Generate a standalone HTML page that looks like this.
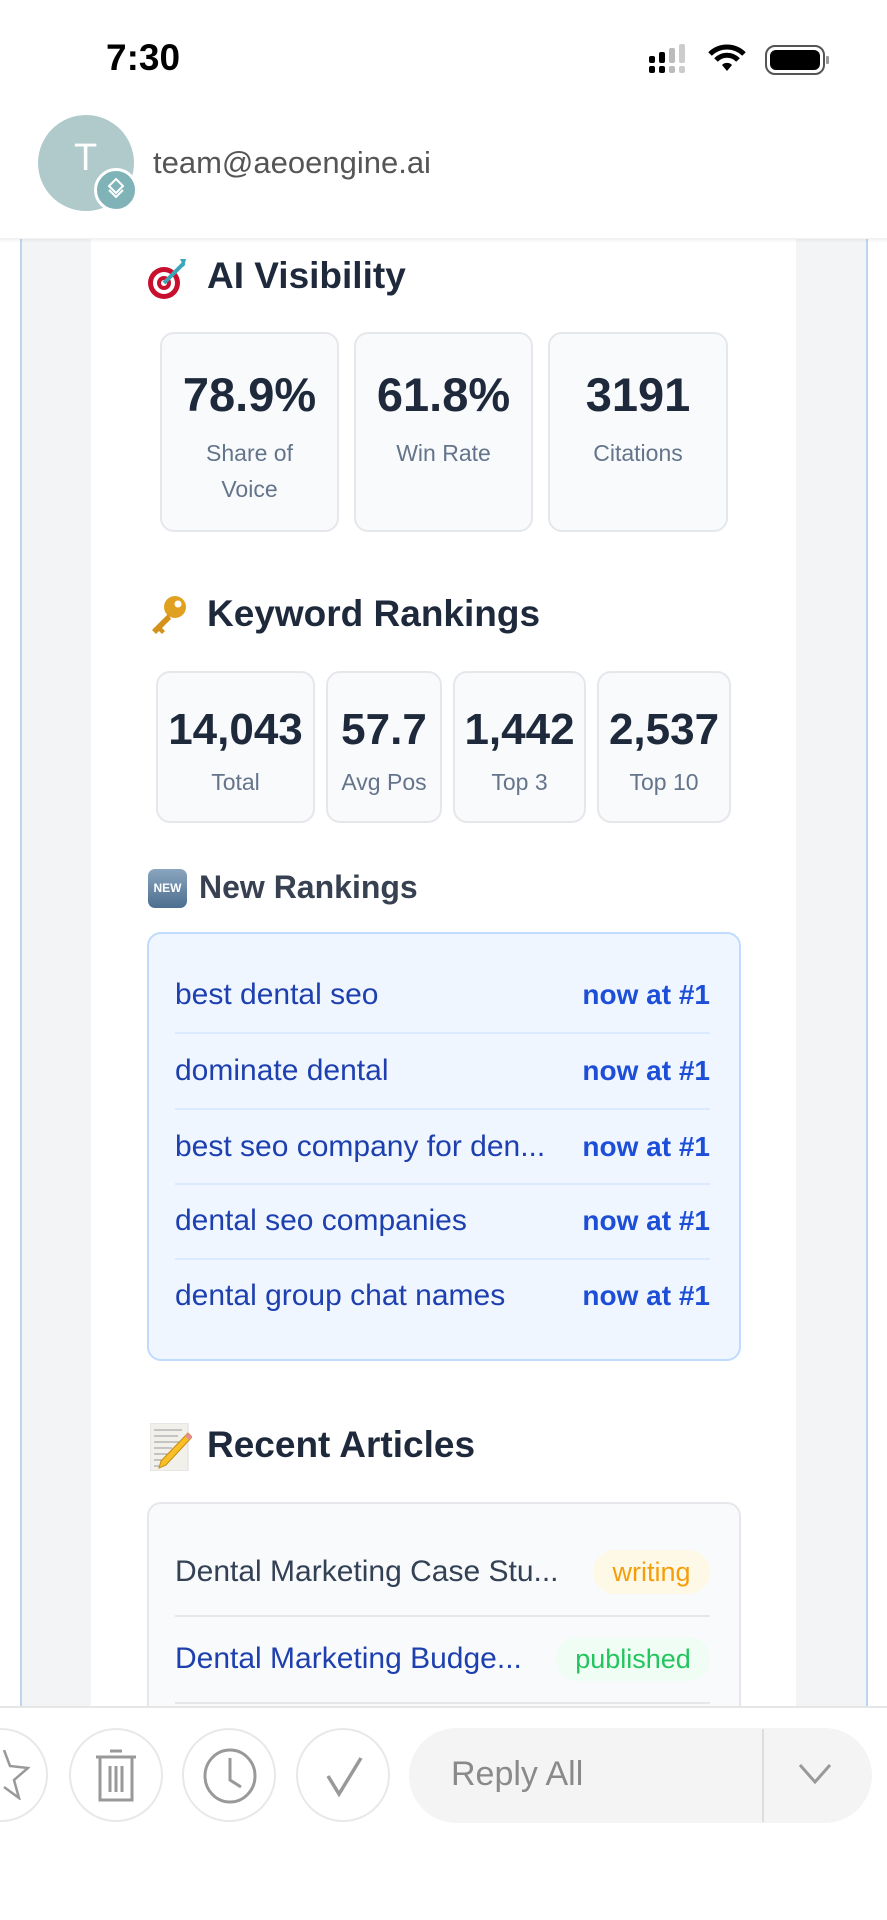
<!DOCTYPE html>
<html><head><meta charset="utf-8"><style>
*{margin:0;padding:0;box-sizing:border-box}
body{width:887px;height:1920px;position:relative;overflow:hidden;background:#fff;font-family:"Liberation Sans",sans-serif}
.a{position:absolute}
.box{position:absolute;background:#f8fafc;border:2px solid #e5e7eb;border-radius:14px}
.v{position:absolute;left:0;right:0;text-align:center;font-weight:bold;color:#1e293b}
.l{position:absolute;left:0;right:0;text-align:center;color:#64748b;font-size:23px;line-height:36px}
h2{position:absolute;font-size:37px;line-height:44px;font-weight:bold;color:#1e293b}
.row{position:absolute;left:175px;width:535px;font-size:30px;line-height:40px}
.row .r{position:absolute;right:0;top:0;font-weight:bold;color:#1d4ed8;font-size:28px}
.sep{position:absolute;left:175px;width:535px;height:2px}
.circ{position:absolute;width:94px;height:94px;border:2px solid #e8e8e8;border-radius:50%;top:1728px}
</style></head><body>
<div class="a" style="left:20px;top:239px;width:848px;height:1467px;background:#f3f4f6;border-left:2px solid #bcd6f0;border-right:2px solid #bcd6f0"></div>
<div class="a" style="left:91px;top:239px;width:705px;height:1467px;background:#fff"></div>
<div class="a" style="left:0;top:238px;width:887px;height:5px;background:linear-gradient(rgba(0,0,0,.06),rgba(0,0,0,0))"></div>

<div class="a" style="left:106px;top:37px;font-size:37px;color:#000;font-weight:bold">7:30</div>
<svg class="a" style="left:645px;top:42px" width="185" height="36" viewBox="0 0 185 36">
<rect x="4" y="14" width="6" height="7" rx="2" fill="#000"/><rect x="4" y="24" width="6" height="7" rx="2" fill="#000"/>
<rect x="14" y="10" width="6" height="11" rx="2" fill="#000"/><rect x="14" y="24" width="6" height="7" rx="2" fill="#000"/>
<rect x="24" y="6" width="6" height="15" rx="2" fill="#bbb"/><rect x="24" y="24" width="6" height="7" rx="2" fill="#bbb"/>
<rect x="34" y="2" width="6" height="19" rx="2" fill="#ccc"/><rect x="34" y="24" width="6" height="7" rx="2" fill="#ccc"/>
<path d="M65 12a24 24 0 0 1 34 0" stroke="#000" stroke-width="5" fill="none"/><path d="M71 18a15 15 0 0 1 22 0" stroke="#000" stroke-width="5" fill="none"/><path d="M77 23l5 6 5-6a7 7 0 0 0-10 0z" fill="#000"/>
<rect x="121" y="4" width="58" height="28" rx="9" fill="none" stroke="#555" stroke-width="2"/><rect x="125" y="8" width="50" height="20" rx="6" fill="#000"/><rect x="181" y="14" width="3" height="8" rx="1" fill="#999"/>
</svg>
<div class="a" style="left:38px;top:115px;width:96px;height:96px;border-radius:50%;background:#b0cacc"></div>
<div class="a" style="left:74px;top:137px;font-size:38px;color:#fff">T</div>
<div class="a" style="left:94px;top:168px;width:44px;height:44px;border-radius:50%;background:#7fb3b8;border:3px solid #fff"></div>
<svg class="a" style="left:104px;top:176px" width="24" height="28" viewBox="0 0 24 28"><path d="M12 3l7 7-7 7-7-7z M5 14l7 7 7-7" stroke="#fff" stroke-width="2" fill="none"/></svg>
<div class="a" style="left:153px;top:145px;font-size:31px;color:#555">team@aeoengine.ai</div>

<svg class="a" style="left:146px;top:255px" width="46" height="46" viewBox="0 0 46 46"><circle cx="18" cy="28" r="16" fill="#c8102e"/><circle cx="18" cy="28" r="11" fill="#fff"/><circle cx="18" cy="28" r="7" fill="#c8102e"/><circle cx="18" cy="28" r="3" fill="#fff"/><path d="M18 28L38 8" stroke="#3aa7b8" stroke-width="4"/><path d="M34 4l6 0-2 8z" fill="#3aa7b8"/></svg>
<h2 style="left:207px;top:254px">AI Visibility</h2>
<div class="box" style="left:160px;top:332px;width:179px;height:200px"><div class="v" style="top:33px;font-size:47px;line-height:56px">78.9%</div><div class="l" style="top:101px">Share of<br>Voice</div></div>
<div class="box" style="left:354px;top:332px;width:179px;height:200px"><div class="v" style="top:33px;font-size:47px;line-height:56px">61.8%</div><div class="l" style="top:101px">Win Rate</div></div>
<div class="box" style="left:548px;top:332px;width:180px;height:200px"><div class="v" style="top:33px;font-size:47px;line-height:56px">3191</div><div class="l" style="top:101px">Citations</div></div>

<svg class="a" style="left:146px;top:593px" width="44" height="44" viewBox="0 0 44 44"><circle cx="29" cy="14" r="11" fill="#e0a020"/><circle cx="32" cy="11" r="3.5" fill="#fff"/><path d="M22 21L6 37l4 4 3-3 3 3 3-3-3-3 9-9z" fill="#d4921a"/></svg>
<h2 style="left:207px;top:592px">Keyword Rankings</h2>
<div class="box" style="left:156px;top:671px;width:159px;height:152px"><div class="v" style="top:31px;font-size:44px;line-height:52px">14,043</div><div class="l" style="top:91px">Total</div></div>
<div class="box" style="left:326px;top:671px;width:116px;height:152px"><div class="v" style="top:31px;font-size:44px;line-height:52px">57.7</div><div class="l" style="top:91px">Avg Pos</div></div>
<div class="box" style="left:453px;top:671px;width:133px;height:152px"><div class="v" style="top:31px;font-size:44px;line-height:52px">1,442</div><div class="l" style="top:91px">Top 3</div></div>
<div class="box" style="left:597px;top:671px;width:134px;height:152px"><div class="v" style="top:31px;font-size:44px;line-height:52px">2,537</div><div class="l" style="top:91px">Top 10</div></div>

<div class="a" style="left:148px;top:869px;width:39px;height:39px;border-radius:7px;background:linear-gradient(#8aa5bf,#4d6e8e);color:#fff;font-size:12px;font-weight:bold;line-height:39px;text-align:center">NEW</div>
<div class="a" style="left:199px;top:867px;font-size:32px;line-height:40px;font-weight:bold;color:#374151">New Rankings</div>
<div class="a" style="left:147px;top:932px;width:594px;height:429px;background:#eff6ff;border:2px solid #bfdbfe;border-radius:14px"></div>
<div class="row" style="top:975px;color:#1e40af">best dental seo<span class="r">now at #1</span></div>
<div class="sep" style="top:1032px;background:#dbeafe"></div>
<div class="row" style="top:1051px;color:#1e40af">dominate dental<span class="r">now at #1</span></div>
<div class="sep" style="top:1108px;background:#dbeafe"></div>
<div class="row" style="top:1127px;color:#1e40af">best seo company for den...<span class="r">now at #1</span></div>
<div class="sep" style="top:1183px;background:#dbeafe"></div>
<div class="row" style="top:1201px;color:#1e40af">dental seo companies<span class="r">now at #1</span></div>
<div class="sep" style="top:1258px;background:#dbeafe"></div>
<div class="row" style="top:1276px;color:#1e40af">dental group chat names<span class="r">now at #1</span></div>

<svg class="a" style="left:150px;top:1423px" width="42" height="48" viewBox="0 0 42 48"><rect x="0" y="0" width="38" height="48" fill="#f2f0ea" stroke="#ddd"/><g stroke="#999" stroke-width="1"><path d="M4 7h28M4 13h24M4 19h26M4 25h18M4 31h14M4 37h12M4 43h10"/></g><path d="M38 10l4 4-26 28-7 3 2-7z" fill="#f6c026" stroke="#c98a10"/><path d="M38 10l4 4-3 3-4-4z" fill="#e88a9a"/></svg>
<h2 style="left:207px;top:1423px">Recent Articles</h2>
<div class="a" style="left:147px;top:1502px;width:594px;height:260px;background:#f8fafc;border:2px solid #e5e7eb;border-radius:14px"></div>
<div class="row" style="top:1552px;color:#334155">Dental Marketing Case Stu...</div>
<div class="a" style="left:593px;top:1550px;width:117px;height:44px;border-radius:22px;background:#fef9e7;color:#f59e0b;font-size:27px;line-height:44px;text-align:center">writing</div>
<div class="sep" style="top:1615px;background:#e5e7eb"></div>
<div class="row" style="top:1639px;color:#1e40af">Dental Marketing Budge...</div>
<div class="a" style="left:556px;top:1637px;width:154px;height:44px;border-radius:22px;background:#f0fdf4;color:#22c55e;font-size:27px;line-height:44px;text-align:center">published</div>
<div class="sep" style="top:1702px;background:#e5e7eb"></div>

<div class="a" style="left:0;top:1706px;width:887px;height:214px;background:#fff;border-top:2px solid #e6e6e6"></div>
<div class="circ" style="left:-46px"></div>
<svg class="a" style="left:0;top:1750px" width="30" height="50" viewBox="0 0 30 50"><path d="M4 0l6 16 18 2-14 12 5 18-15-11" stroke="#999" stroke-width="2.5" fill="none"/></svg>
<div class="circ" style="left:69px"></div>
<svg class="a" style="left:88px;top:1748px" width="56" height="56" viewBox="0 0 56 56"><path d="M8 9h40M22 3h12M12 10v42h32V10M22 18v26M28 18v26M34 18v26" stroke="#999" stroke-width="3" fill="none"/></svg>
<div class="circ" style="left:182px"></div>
<svg class="a" style="left:202px;top:1748px" width="56" height="56" viewBox="0 0 56 56"><ellipse cx="28" cy="28" rx="25" ry="26" stroke="#999" stroke-width="3" fill="none"/><path d="M28 10v22l11 7" stroke="#999" stroke-width="3" fill="none"/></svg>
<div class="circ" style="left:296px"></div>
<svg class="a" style="left:316px;top:1752px" width="56" height="52" viewBox="0 0 56 52"><path d="M12 24l11 18L45 6" stroke="#999" stroke-width="3.5" fill="none"/></svg>
<div class="a" style="left:409px;top:1728px;width:463px;height:95px;border-radius:48px;background:#f4f4f4"></div>
<div class="a" style="left:762px;top:1729px;width:2px;height:93px;background:#ddd"></div>
<div class="a" style="left:451px;top:1755px;font-size:34px;color:#8a8a8a">Reply All</div>
<svg class="a" style="left:797px;top:1762px" width="36" height="24" viewBox="0 0 36 24"><path d="M3 3l15 17L33 3" stroke="#999" stroke-width="3" fill="none"/></svg>
</body></html>
